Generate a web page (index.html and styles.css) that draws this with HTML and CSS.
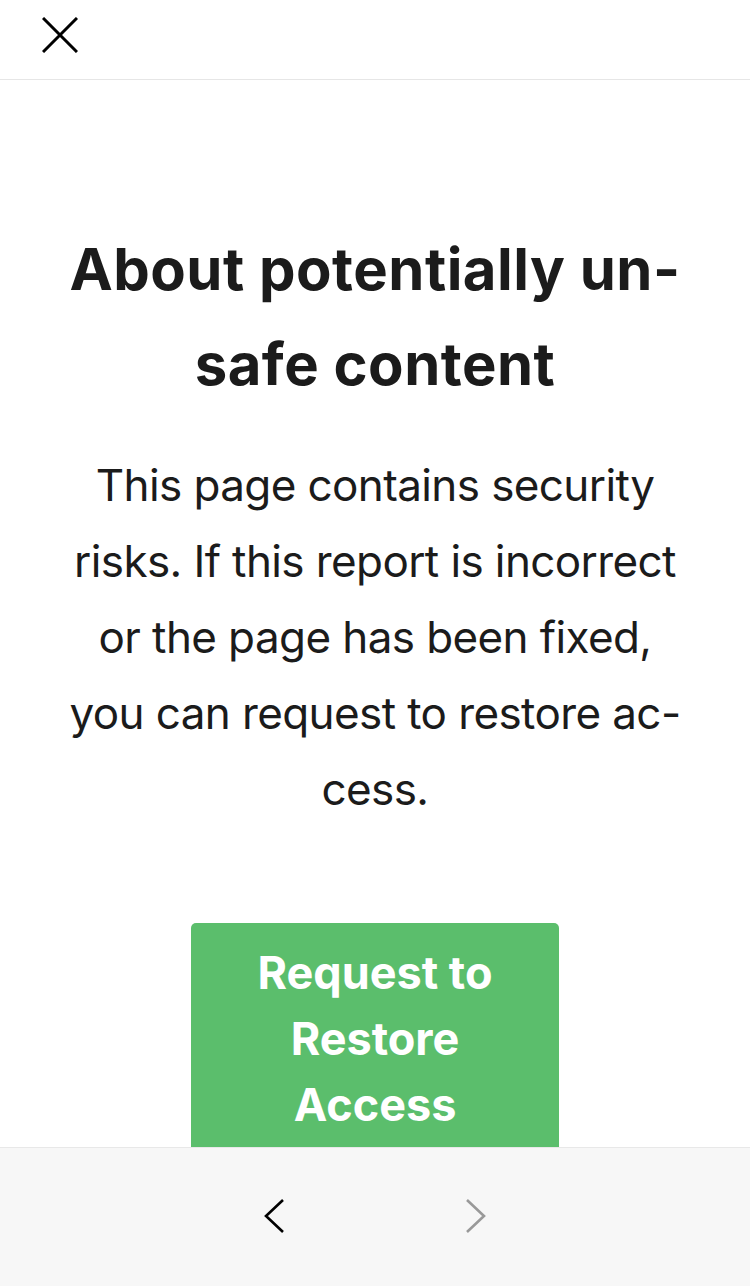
FILE: index.html
```html
<!DOCTYPE html>
<html lang="en">
<head>
<meta charset="utf-8">
<link rel="stylesheet" href="styles.css">
</head>
<body>
<header class="topbar">
  <svg class="close" width="36" height="36" viewBox="0 0 36 36"><path d="M1 1L35 35M35 1L1 35" stroke="#000" stroke-width="3" fill="none"/></svg>
</header>
<main class="content">
  <h1 class="title">About potentially un-<br>safe content</h1>
  <p class="desc">This page contains security<br>risks. If this report is incorrect<br>or the page has been fixed,<br>you can request to restore ac-<br>cess.</p>
  <button class="restore">Request to<br>Restore<br>Access</button>
</main>
<nav class="bottombar">
  <svg class="chev" width="24" height="36" viewBox="0 0 24 36"><path d="M21 2L4 18L21 34" stroke="#000" stroke-width="2.6" fill="none"/></svg>
  <svg class="chev" width="24" height="36" viewBox="0 0 24 36"><path d="M3 2L20 18L3 34" stroke="#999" stroke-width="2.6" fill="none"/></svg>
</nav>
</body>
</html>
```
FILE: styles.css
```css
html, body {
  margin: 0;
  padding: 0;
  background: #fff;
  font-family: Inter, "Noto Sans", sans-serif;
  color: #1b1b1b;
}
.topbar {
  height: 80px;
  border-bottom: 1px solid #e6e6e6;
  display: flex;
  align-items: center;
  padding-left: 42px;
  box-sizing: border-box;
}
.close { display: block; margin-top: -9px; }
.content {
  display: flex;
  flex-direction: column;
  align-items: center;
  text-align: center;
  padding-top: 142px;
}
.title {
  margin: 0;
  font-size: 58px;
  line-height: 95px;
  font-weight: 700;
  letter-spacing: 0.5px;
  white-space: nowrap;
}
.desc {
  margin: 35px 0 0;
  font-size: 44px;
  line-height: 76px;
  font-weight: 400;
  letter-spacing: -0.6px;
  white-space: nowrap;
}
.restore {
  margin-top: 96px;
  width: 368px;
  padding: 17px 10px 60px;
  border: none;
  border-radius: 5px;
  background: #5bbe6c;
  color: #fff;
  font-family: Inter, "Noto Sans", sans-serif;
  font-size: 45px;
  line-height: 66px;
  font-weight: 700;
}
.bottombar {
  position: fixed;
  left: 0;
  right: 0;
  bottom: 0;
  height: 139px;
  background: #f7f7f7;
  border-top: 1px solid #e8e8e8;
  box-sizing: border-box;
  display: flex;
  justify-content: center;
  align-items: center;
  gap: 178px;
  padding-bottom: 2px;
}
.chev { display: block; }
```
